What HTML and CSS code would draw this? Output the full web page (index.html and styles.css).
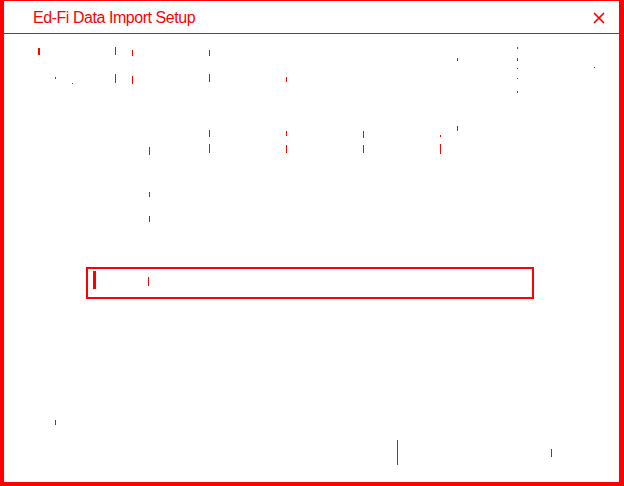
FILE: index.html
```html
<!DOCTYPE html>
<html>
<head>
<meta charset="utf-8">
<link rel="stylesheet" href="styles.css">
</head>
<body>
<div class="window">
  <div class="titlebar">
    <span class="title">Ed-Fi Data Import Setup</span>
    <svg class="close" width="12" height="12" viewBox="0 0 12 12"><path d="M1 1 L11 11 M11 1 L1 11" stroke="#ff0000" stroke-width="1.7" fill="none"/></svg>
  </div>
  <div class="content">
    <div class="field">
      <span class="caret"></span>
      <span class="tick"></span>
    </div>
  </div>
</div>
<div class="specks">
  <i style="left:38px;top:48px;height:7px;width:2px"></i>
  <i style="left:115px;top:47px;height:8px"></i>
  <i style="left:132px;top:50px;height:6px"></i>
  <i style="left:209px;top:50px;height:6px"></i>
  <i style="left:55px;top:77px;height:2px"></i>
  <i style="left:72px;top:83px;height:1px"></i>
  <i style="left:115px;top:74px;height:9px"></i>
  <i style="left:132px;top:76px;height:8px"></i>
  <i style="left:209px;top:74px;height:8px"></i>
  <i style="left:286px;top:77px;height:5px"></i>
  <i style="left:457px;top:58px;height:3px"></i>
  <i style="left:517px;top:47px;height:2px"></i>
  <i style="left:517px;top:58px;height:3px"></i>
  <i style="left:517px;top:68px;height:1px"></i>
  <i style="left:517px;top:78px;height:1px"></i>
  <i style="left:517px;top:91px;height:2px"></i>
  <i style="left:594px;top:67px;height:1px"></i>
  <i style="left:149px;top:147px;height:8px"></i>
  <i style="left:209px;top:130px;height:7px"></i>
  <i style="left:209px;top:144px;height:9px"></i>
  <i style="left:286px;top:131px;height:5px"></i>
  <i style="left:286px;top:145px;height:8px"></i>
  <i style="left:363px;top:131px;height:7px"></i>
  <i style="left:363px;top:145px;height:8px"></i>
  <i style="left:440px;top:135px;height:2px"></i>
  <i style="left:440px;top:144px;height:10px"></i>
  <i style="left:457px;top:126px;height:5px"></i>
  <i style="left:149px;top:192px;height:5px"></i>
  <i style="left:149px;top:216px;height:6px"></i>
  <i style="left:55px;top:420px;height:5px"></i>
  <i style="left:397px;top:440px;height:25px"></i>
  <i style="left:551px;top:449px;height:8px"></i>
</div>
</body>
</html>
```
FILE: styles.css
```css
html, body {
  margin: 0;
  padding: 0;
  background: #ffffff;
}
body {
  position: relative;
  width: 624px;
  height: 486px;
  overflow: hidden;
  font-family: "Liberation Sans", Arial, sans-serif;
}
.window {
  box-sizing: border-box;
  width: 624px;
  height: 486px;
  border-style: solid;
  border-color: #ff0000;
  border-width: 1px 5px 4px 4px;
  background: #ffffff;
  display: flex;
  flex-direction: column;
}
.titlebar {
  height: 32px;
  border-bottom: 1px solid #ff0000;
  display: flex;
  align-items: center;
  padding-left: 29px;
  padding-right: 14px;
  justify-content: space-between;
}
.title {
  color: #ff0000;
  font-size: 16px;
  letter-spacing: -0.45px;
  line-height: 18px;
  margin-top: 1px;
}
.close {
  display: block;
  margin-top: 1px;
}
.content {
  flex: 1;
  padding-top: 233px;
  padding-left: 82px;
}
.field {
  box-sizing: border-box;
  width: 448px;
  height: 32px;
  border: 2px solid #ff0000;
  display: flex;
  align-items: flex-start;
  padding-left: 5px;
  padding-top: 2px;
}
.caret {
  width: 3px;
  height: 18px;
  background: #ff0000;
}
.tick {
  width: 1px;
  height: 9px;
  background: #ff0000;
  margin-left: 52px;
  margin-top: 6px;
}
.specks {
  position: absolute;
  left: 0;
  top: 0;
  width: 0;
  height: 0;
}
.specks i {
  position: absolute;
  display: block;
  width: 1px;
  background: #ff0000;
}
```
